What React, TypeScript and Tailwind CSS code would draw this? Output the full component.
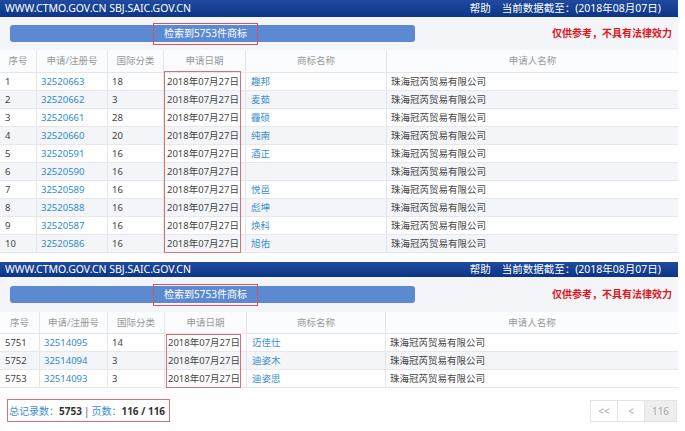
const font = '"Noto Sans", "Noto Sans CJK SC", sans-serif';

type Row = { no: string; reg: string; cls: string; name: string };

const page1: Row[] = [
  { no: '1', reg: '32520663', cls: '18', name: '趣邦' },
  { no: '2', reg: '32520662', cls: '3', name: '麦茹' },
  { no: '3', reg: '32520661', cls: '28', name: '霾硕' },
  { no: '4', reg: '32520660', cls: '20', name: '纯南' },
  { no: '5', reg: '32520591', cls: '16', name: '酒正' },
  { no: '6', reg: '32520590', cls: '16', name: '' },
  { no: '7', reg: '32520589', cls: '16', name: '悦邑' },
  { no: '8', reg: '32520588', cls: '16', name: '彪坤' },
  { no: '9', reg: '32520587', cls: '16', name: '焕科' },
  { no: '10', reg: '32520586', cls: '16', name: '旭佑' },
];

const page116: Row[] = [
  { no: '5751', reg: '32514095', cls: '14', name: '迈佳仕' },
  { no: '5752', reg: '32514094', cls: '3', name: '迪姿木' },
  { no: '5753', reg: '32514093', cls: '3', name: '迪姿思' },
];

const headers = ['序号', '申请/注册号', '国际分类', '申请日期', '商标名称', '申请人名称'];

function TopBar({ h }: { h: string }) {
  return (
    <div
      className={`${h} flex items-center justify-between bg-gradient-to-b from-[#1f4a9f] to-[#0c3585] text-white text-[10.5px] leading-none`}
    >
      <span className="pl-[5px]">WWW.CTMO.GOV.CN SBJ.SAIC.GOV.CN</span>
      <span className="flex gap-[11px] pr-[17px]">
        <span>帮助</span>
        <span>当前数据截至：(2018年08月07日)</span>
      </span>
    </div>
  );
}

function Toolbar({ h }: { h: string }) {
  return (
    <div className={`${h} flex items-center justify-between bg-[#f3f5f8] pl-[10px] pr-[6px]`}>
      <div className="flex h-[17px] w-[405px] items-center justify-center rounded-[3px] bg-[#5b8ad3]">
        <span className="mr-[14px] flex h-[22px] items-center border border-[#d9535f] px-[10px] text-[10px] text-white">
          检索到5753件商标
        </span>
      </div>
      <span className="text-[10px] font-bold text-[#e0161c]">仅供参考，不具有法律效力</span>
    </div>
  );
}

function ResultTable({
  rows,
  cols,
  headH,
  box,
}: {
  rows: Row[];
  cols: string;
  headH: string;
  box: string;
}) {
  return (
    <div className="text-[9.5px] leading-none">
      {/* header */}
      <div className={`grid ${cols} ${headH} border-b border-[#e4e6ea] bg-[#fbfcfd] text-[#999]`}>
        {headers.map((t, i) => (
          <div
            key={t}
            className={`flex items-center justify-center ${i < 5 ? 'border-r border-[#e4e6ea]' : ''}`}
          >
            {t}
          </div>
        ))}
      </div>
      {/* rows */}
      <div className="relative">
        {rows.map((r, i) => (
          <div
            key={r.no}
            className={`grid ${cols} h-[18px] border-b border-[#e6e8eb] text-[#444] ${
              i % 2 === 1 ? 'bg-[#f3f5f8]' : 'bg-white'
            }`}
          >
            <div className="flex items-center border-r border-[#e4e6ea] pl-[5px]">{r.no}</div>
            <div className="flex items-center border-r border-[#e4e6ea] pl-[4px] text-[#2f8cc9]">{r.reg}</div>
            <div className="flex items-center border-r border-[#e4e6ea] pl-[4px]">{r.cls}</div>
            <div className="flex items-center border-r border-[#e4e6ea] pl-[3px]">2018年07月27日</div>
            <div className="flex items-center border-r border-[#e4e6ea] pl-[5px] text-[#3d8fcc]">{r.name}</div>
            <div className="flex items-center pl-[4px]">珠海冠芮贸易有限公司</div>
          </div>
        ))}
        {/* annotation */}
        <div className={`pointer-events-none absolute border border-[#d9707a] ${box}`} />
      </div>
    </div>
  );
}

export default function App() {
  return (
    <div className="h-[431px] w-[685px] overflow-hidden bg-white" style={{ fontFamily: font }}>
      <div className="w-[678px]">
        <TopBar h="h-[17px]" />
        <Toolbar h="h-[33px]" />
        <ResultTable
          rows={page1}
          cols="grid-cols-[37px_71px_56px_82px_141px_291px]"
          headH="h-[23px]"
          box="left-[164px] top-[-2px] h-[182px] w-[77px]"
        />
      </div>

      <div className="mt-[9px] w-[678px]">
        <TopBar h="h-[15px]" />
        <Toolbar h="h-[35px]" />
        <ResultTable
          rows={page116}
          cols="grid-cols-[40px_68px_57px_82px_139px_292px]"
          headH="h-[22px]"
          box="left-[166px] top-0 h-[54px] w-[75px]"
        />
        {/* footer */}
        <div className="flex items-center justify-between pt-[11px] pl-[7px] pr-[1px]">
          <div className="flex h-[23px] items-center whitespace-nowrap border border-[#d9707a] pl-[1px] pr-[4px] text-[10px] leading-none">
            <span className="text-[#3d8fcc]">总记录数：</span>
            <span className="font-bold text-[#333]">5753</span>
            <span className="px-[2px] text-[#555]">|</span>
            <span className="text-[#3d8fcc]">页数：</span>
            <span className="font-bold text-[#333]">116 / 116</span>
          </div>
          <div className="flex h-[22px] border border-[#e2e4e7] text-[10px] leading-none text-[#a8a8a8]">
            <span className="flex w-[27px] items-center justify-center border-r border-[#e2e4e7]">&lt;&lt;</span>
            <span className="flex w-[27px] items-center justify-center border-r border-[#e2e4e7]">&lt;</span>
            <span className="flex w-[31px] items-center justify-center bg-[#eeeeee]">116</span>
          </div>
        </div>
      </div>
    </div>
  );
}
